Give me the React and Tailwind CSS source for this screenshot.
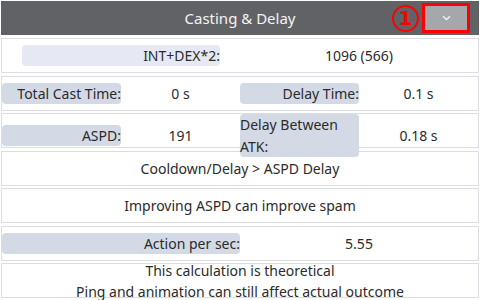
export default function App() {
  const label = 'h-[21px] rounded-[4px] bg-[#d3dae6] flex items-center justify-end leading-[21px]';
  const row = 'h-[35px] border border-[#dcdce4] flex items-center';

  return (
    <div
      className="w-[480px] h-[300px] bg-white p-px overflow-hidden text-[14px] text-[#2b2b2b]"
      style={{ fontFamily: '"Noto Sans", "Liberation Sans", sans-serif' }}
    >
      {/* Header */}
      <div className="relative h-[34px] bg-[#616266] flex items-center justify-center text-[#f4f4f4] text-[15px]">
        <span>Casting &amp; Delay</span>
        <div className="absolute inset-y-0 right-[9px] flex items-center gap-[3px]">
          {/* circled number marker */}
          <span
            className="w-[27px] h-[27px] rounded-full border-[2.5px] border-[#ff0000] text-[#ff0000] flex items-center justify-center text-[20px] leading-none font-bold"
            style={{ fontFamily: '"DejaVu Sans", sans-serif' }}
          >
            1
          </span>
          <button className="w-[48px] h-[30px] border-[3px] border-[#ff0000] bg-[#a5a7ab] flex items-center justify-center">
            <svg width="9" height="6" viewBox="0 0 9 6">
              <path d="M1 1.2 L4.5 4.5 L8 1.2" fill="none" stroke="#f2f2f2" strokeWidth="1.4" />
            </svg>
          </button>
        </div>
      </div>

      <div className="mt-[3px] flex flex-col gap-[2.5px]">
        {/* Row 1 */}
        <div className={`${row} grid grid-cols-2`}>
          <div className="mx-[20px] h-[21px] rounded-[4px] bg-[#e6e9f3] flex items-center justify-end leading-[21px]">
            INT+DEX*2:
          </div>
          <div className="text-center">1096 (566)</div>
        </div>

        {/* Row 2 */}
        <div className={`${row} grid grid-cols-4`}>
          <div className={label}>Total Cast Time:</div>
          <div className="text-center">0 s</div>
          <div className={label}>Delay Time:</div>
          <div className="text-center">0.1 s</div>
        </div>

        {/* Row 3 */}
        <div className={`${row} grid grid-cols-4`}>
          <div className={label}>ASPD:</div>
          <div className="text-center">191</div>
          <div className="rounded-[4px] bg-[#d3dae6] flex justify-end leading-[21.5px] relative z-10">
            Delay Between ATK:
          </div>
          <div className="text-center">0.18 s</div>
        </div>

        {/* Row 4 */}
        <div className={`${row} justify-center`}>Cooldown/Delay &gt; ASPD Delay</div>

        {/* Row 5 */}
        <div className={`${row} justify-center`}>Improving ASPD can improve spam</div>

        {/* Row 6 */}
        <div className={`${row} grid grid-cols-2`}>
          <div className={label}>Action per sec:</div>
          <div className="text-center">5.55</div>
        </div>

        {/* Row 7 */}
        <div className={`${row} flex-col justify-center leading-[21px]`}>
          <div>This calculation is theoretical</div>
          <div>Ping and animation can still affect actual outcome</div>
        </div>
      </div>
    </div>
  );
}
